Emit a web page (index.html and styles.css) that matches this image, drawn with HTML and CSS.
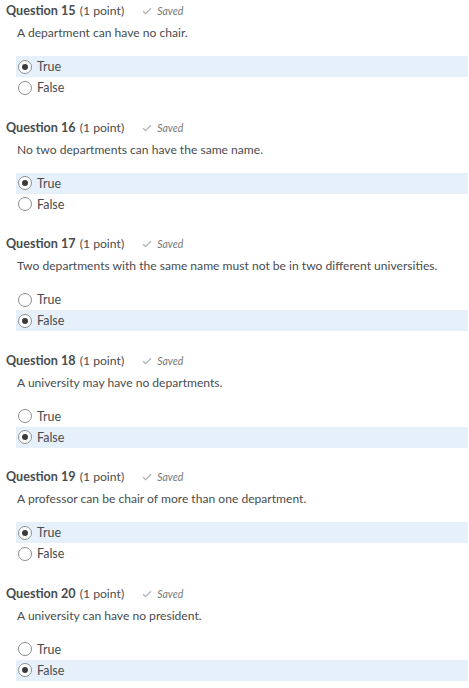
FILE: index.html
```html
<!DOCTYPE html>
<html>
<head>
<meta charset="utf-8">
<link rel="stylesheet" href="styles.css">
</head>
<body>
<div class="quiz">
  <div class="q">
    <div class="q-head"><span class="q-title">Question 15</span> <span class="q-pts">(1 point)</span><span class="saved"><svg class="chk" viewBox="0 0 10 8"><path d="M1 4.2 L3.6 6.6 L9 1.2"/></svg>Saved</span></div>
    <div class="q-text">A department can have no chair.</div>
    <div class="opts">
      <div class="opt sel"><span class="radio on"></span>True</div>
      <div class="opt"><span class="radio"></span>False</div>
    </div>
  </div>
  <div class="q">
    <div class="q-head"><span class="q-title">Question 16</span> <span class="q-pts">(1 point)</span><span class="saved"><svg class="chk" viewBox="0 0 10 8"><path d="M1 4.2 L3.6 6.6 L9 1.2"/></svg>Saved</span></div>
    <div class="q-text">No two departments can have the same name.</div>
    <div class="opts">
      <div class="opt sel"><span class="radio on"></span>True</div>
      <div class="opt"><span class="radio"></span>False</div>
    </div>
  </div>
  <div class="q">
    <div class="q-head"><span class="q-title">Question 17</span> <span class="q-pts">(1 point)</span><span class="saved"><svg class="chk" viewBox="0 0 10 8"><path d="M1 4.2 L3.6 6.6 L9 1.2"/></svg>Saved</span></div>
    <div class="q-text">Two departments with the same name must not be in two different universities.</div>
    <div class="opts">
      <div class="opt"><span class="radio"></span>True</div>
      <div class="opt sel"><span class="radio on"></span>False</div>
    </div>
  </div>
  <div class="q">
    <div class="q-head"><span class="q-title">Question 18</span> <span class="q-pts">(1 point)</span><span class="saved"><svg class="chk" viewBox="0 0 10 8"><path d="M1 4.2 L3.6 6.6 L9 1.2"/></svg>Saved</span></div>
    <div class="q-text">A university may have no departments.</div>
    <div class="opts">
      <div class="opt"><span class="radio"></span>True</div>
      <div class="opt sel"><span class="radio on"></span>False</div>
    </div>
  </div>
  <div class="q">
    <div class="q-head"><span class="q-title">Question 19</span> <span class="q-pts">(1 point)</span><span class="saved"><svg class="chk" viewBox="0 0 10 8"><path d="M1 4.2 L3.6 6.6 L9 1.2"/></svg>Saved</span></div>
    <div class="q-text">A professor can be chair of more than one department.</div>
    <div class="opts">
      <div class="opt sel"><span class="radio on"></span>True</div>
      <div class="opt"><span class="radio"></span>False</div>
    </div>
  </div>
  <div class="q">
    <div class="q-head"><span class="q-title">Question 20</span> <span class="q-pts">(1 point)</span><span class="saved"><svg class="chk" viewBox="0 0 10 8"><path d="M1 4.2 L3.6 6.6 L9 1.2"/></svg>Saved</span></div>
    <div class="q-text">A university can have no president.</div>
    <div class="opts">
      <div class="opt"><span class="radio"></span>True</div>
      <div class="opt sel"><span class="radio on"></span>False</div>
    </div>
  </div>
</div>
</body>
</html>
```

FILE: styles.css
```css
html, body {
  margin: 0;
  padding: 0;
  background: #ffffff;
}
body {
  font-family: Lato, "Open Sans", sans-serif;
  color: #494c4e;
}
.quiz {
  width: 468px;
  padding-left: 6px;
  box-sizing: border-box;
}
.q {
  height: 116.6px;
}
.q-head {
  height: 17px;
  line-height: 17px;
  white-space: nowrap;
}
.q-title {
  font-size: 12.6px;
  font-weight: 700;
  color: #494c4e;
}
.q-pts {
  font-size: 12.2px;
  color: #494c4e;
}
.saved {
  margin-left: 18px;
  font-size: 10.5px;
  font-style: italic;
  color: #75797c;
}
.chk {
  width: 10px;
  height: 8px;
  margin-right: 5px;
  fill: none;
  stroke: #b0b4b7;
  stroke-width: 1.3;
  vertical-align: 0;
}
.q-text {
  margin-top: 6px;
  margin-left: 11px;
  font-size: 12.1px;
  line-height: 20px;
  color: #494c4e;
}
.opts {
  margin-top: 13px;
  margin-left: 10px;
}
.opt {
  height: 21px;
  display: flex;
  align-items: center;
  font-size: 12.5px;
  color: #494c4e;
}
.opt.sel {
  background: #e6f0fb;
}
.radio {
  box-sizing: border-box;
  width: 14px;
  height: 14px;
  border: 1px solid #8a8f92;
  border-radius: 50%;
  background: #fff;
  margin-left: 2px;
  margin-right: 5px;
  display: flex;
  align-items: center;
  justify-content: center;
}
.radio.on::after {
  content: "";
  width: 6px;
  height: 6px;
  border-radius: 50%;
  background: #3a3d3f;
}
```
